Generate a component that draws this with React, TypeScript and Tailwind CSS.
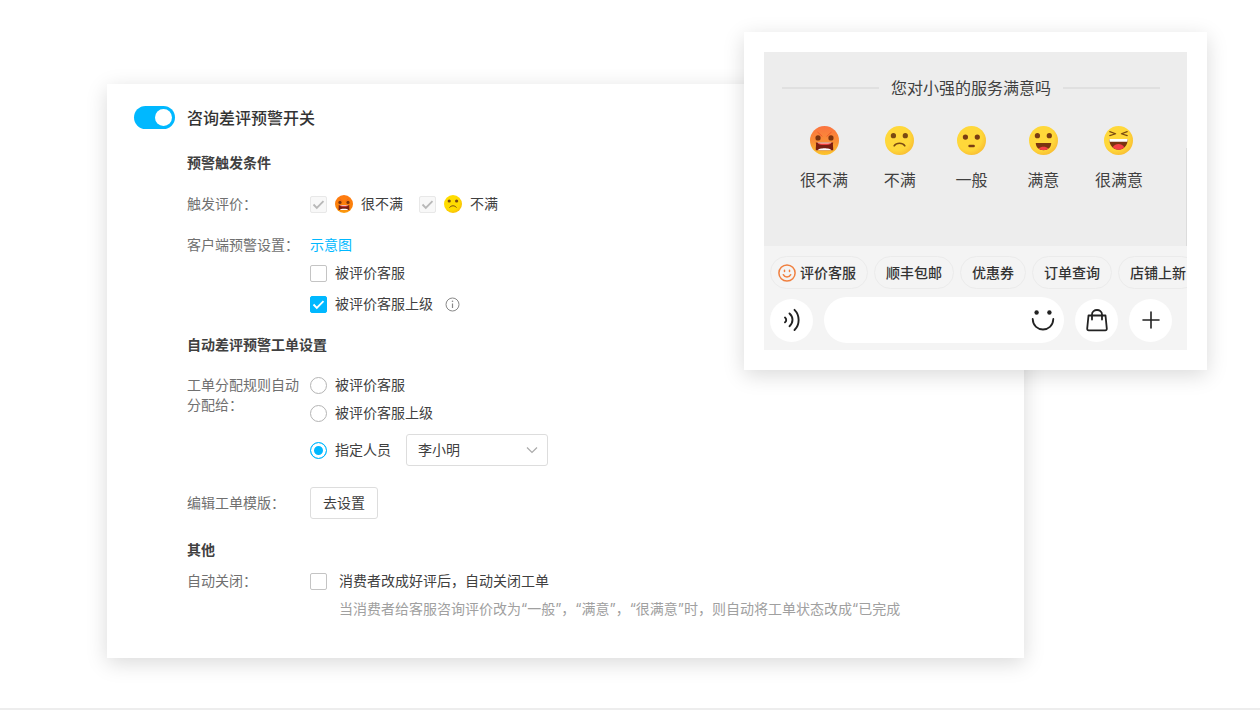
import { useState } from 'react';
import type { ReactNode } from 'react';

type Mood = 'angry' | 'sad' | 'neutral' | 'happy' | 'laugh';

const ratings: { mood: Mood; label: string }[] = [
  { mood: 'angry', label: '很不满' },
  { mood: 'sad', label: '不满' },
  { mood: 'neutral', label: '一般' },
  { mood: 'happy', label: '满意' },
  { mood: 'laugh', label: '很满意' },
];

const chips = ['顺丰包邮', '优惠券', '订单查询', '店铺上新'];

const faceFill = {
  soft: { angry: 'url(#face-angry)', other: 'url(#face-yellow)' },
  vivid: { angry: 'url(#face-angry-vivid)', other: 'url(#face-yellow-vivid)' },
};

const Emoji = ({ mood, className, tone = 'soft' }: { mood: Mood; className: string; tone?: 'soft' | 'vivid' }) => {
  const angry = mood === 'angry';
  return (
    <svg className={className} viewBox="0 0 30 30" fill="none" aria-hidden="true">
      <defs>
        <linearGradient id="face-angry" x1="0" y1="0" x2="0" y2="1">
          <stop offset="0" stopColor="#fb7440" />
          <stop offset="0.55" stopColor="#f98f35" />
          <stop offset="1" stopColor="#fcc62c" />
        </linearGradient>
        <linearGradient id="face-angry-vivid" x1="0" y1="0" x2="0" y2="1">
          <stop offset="0" stopColor="#ff7a10" />
          <stop offset="0.7" stopColor="#fb8209" />
          <stop offset="1" stopColor="#fba012" />
        </linearGradient>
        <radialGradient id="face-yellow" cx="0.42" cy="0.4" r="0.62">
          <stop offset="0.7" stopColor="#ffd83a" />
          <stop offset="1" stopColor="#f9bf33" />
        </radialGradient>
        <radialGradient id="face-yellow-vivid" cx="0.42" cy="0.4" r="0.62">
          <stop offset="0.7" stopColor="#ffdc00" />
          <stop offset="1" stopColor="#f8bd08" />
        </radialGradient>
      </defs>
      <circle cx="15" cy="15" r="15" fill={angry ? faceFill[tone].angry : faceFill[tone].other} />
      {angry && (
        <>
          <path d="M8 6.500l4.500 4M22 6.500l-4.500 4" stroke="#ee5a2c" strokeWidth="1" strokeLinecap="round" />
          <circle cx="8.300" cy="12.300" r="2.700" fill="#7c3410" />
          <circle cx="21.700" cy="12.300" r="2.700" fill="#7c3410" />
          <path d="M6 17h18c-.8 2.500.3 4.500 0 8H6c-.3-3.500.8-5.500 0-8z" fill="#7a1f12" />
          <path d="M8 17.500h14c-1 3-13 3-14 0z" fill="#ee3f3c" />
          <path d="M7.500 17h15c-.8 1.600-14.200 1.600-15 0z" fill="#ffe9e4" />
          <path d="M8 25c.8-2.800 13.200-2.800 14 0z" fill="#fff" />
        </>
      )}
      {mood === 'sad' && (
        <>
          <circle cx="8.700" cy="10" r="2.700" fill="#7a4a12" />
          <circle cx="21" cy="10" r="2.700" fill="#7a4a12" />
          <path d="M9.500 20.500c2.500-3.500 8.500-3.500 11 0" stroke="#7a4a12" strokeWidth="1.600" strokeLinecap="round" />
        </>
      )}
      {mood === 'neutral' && (
        <>
          <circle cx="8.700" cy="11.500" r="2.700" fill="#7a3d12" />
          <circle cx="21" cy="11.500" r="2.700" fill="#7a3d12" />
          <rect x="11.700" y="19.300" width="6.800" height="2.600" rx="1.300" fill="#7a3d12" />
        </>
      )}
      {mood === 'happy' && (
        <>
          <circle cx="8.700" cy="10" r="2.700" fill="#7a3d12" />
          <circle cx="21" cy="10" r="2.700" fill="#7a3d12" />
          <path d="M7 17.500h16c0 4.500-3.500 7.500-8 7.500s-8-3-8-7.500z" fill="#7a3410" />
          <path d="M10 23.200c2.500-2.200 7.500-2.200 10 0-2.500 2.300-7.500 2.300-10 0z" fill="#f43f45" />
        </>
      )}
      {mood === 'laugh' && (
        <>
          <path d="M6 5.800l6 2.200-6 2M24 5.800l-6 2.200 6 2" stroke="#7a4a12" strokeWidth="1.300" strokeLinecap="round" strokeLinejoin="round" />
          <path d="M5.500 13.500h19c0 7-4 11-9.500 11s-9.500-4-9.500-11z" fill="#7a3410" />
          <path d="M5.500 13.500h19l-.4 2.800H5.900z" fill="#fff" />
          <path d="M9 22c3-4.500 9-4.500 12 0-3 3.300-9 3.300-12 0z" fill="#f43f45" />
        </>
      )}
    </svg>
  );
};

type CheckProps = {
  children: ReactNode;
  defaultChecked?: boolean;
  disabled?: boolean;
  gap?: string;
};

const Check = ({ children, defaultChecked, disabled, gap = 'gap-2' }: CheckProps) => (
  <label className={`flex items-center ${gap}`}>
    <span className="relative flex">
      <input
        type="checkbox"
        defaultChecked={defaultChecked}
        disabled={disabled}
        className="peer size-[17px] appearance-none rounded-xs border border-[#c4c4c4] bg-white checked:border-[#00b8ff] checked:bg-[#00b8ff] disabled:border-[#e8e8e8] disabled:bg-[#f8f8f8]"
      />
      <svg
        className="pointer-events-none absolute inset-0 hidden size-[17px] text-white peer-checked:block peer-disabled:text-[#b8b8b8]"
        viewBox="0 0 17 17"
        fill="none"
        stroke="currentColor"
        strokeWidth="1.8"
      >
        <path d="M3.500 8.500l3.300 3.400 6.700-6.800" />
      </svg>
    </span>
    {children}
  </label>
);

type RadioProps = {
  value: string;
  current: string;
  onSelect: (value: string) => void;
  children: ReactNode;
};

const Radio = ({ value, current, onSelect, children }: RadioProps) => (
  <label className="flex items-center gap-2">
    <input
      type="radio"
      name="assignee"
      checked={current === value}
      onChange={() => onSelect(value)}
      className="size-[17px] appearance-none rounded-full border border-[#b4b4b4] bg-white checked:border-[#00b8ff] checked:bg-[#00b8ff] checked:shadow-[inset_0_0_0_3px_white]"
    />
    {children}
  </label>
);

const Row = ({ label, children }: { label: string; children: ReactNode }) => (
  <div className="grid grid-cols-[115px_1fr] gap-x-2">
    <div className="text-[#707070]">{label}</div>
    <div>{children}</div>
  </div>
);

const SettingsCard = () => {
  const [enabled, setEnabled] = useState(true);
  const [assignee, setAssignee] = useState('person');

  return (
    <section className="mr-[236px] ml-[107px] bg-white pt-[22px] pr-6 pb-[39px] pl-[27px] text-sm leading-5 text-[#404040] shadow-[0_5px_20px_rgba(0,0,0,0.15)]">
      <div className="flex items-center gap-3">
        <button
          type="button"
          role="switch"
          aria-checked={enabled}
          aria-labelledby="alert-title"
          onClick={() => setEnabled(!enabled)}
          className={`flex h-[23px] w-[41px] items-center rounded-full px-[3px] ${enabled ? 'justify-end bg-[#00b8ff]' : 'justify-start bg-[#c4c4c4]'}`}
        >
          <span className="size-[17px] rounded-full bg-white" />
        </button>
        <h2 id="alert-title" className="text-base leading-5 font-medium text-[#333]">咨询差评预警开关</h2>
      </div>

      <div className="mt-6 pl-[53px]">
        <h3 className="font-bold text-[#404040]">预警触发条件</h3>
        <div className="mt-[21px]">
          <Row label="触发评价：">
            <div className="flex gap-4">
              <Check defaultChecked disabled>
                <Emoji mood="angry" tone="vivid" className="size-[18px]" />
                <span>很不满</span>
              </Check>
              <Check defaultChecked disabled>
                <Emoji mood="sad" tone="vivid" className="size-[18px]" />
                <span>不满</span>
              </Check>
            </div>
          </Row>
        </div>
        <div className="mt-[21px]">
          <Row label="客户端预警设置：">
            <a href="#example" className="block text-[#00b8ff]">示意图</a>
            <div className="mt-2">
              <Check>被评价客服</Check>
            </div>
            <div className="mt-[11px] flex items-center gap-3">
              <Check defaultChecked>被评价客服上级</Check>
              <svg className="size-[15px] text-[#888]" viewBox="0 0 15 15" fill="none" stroke="currentColor" aria-hidden="true">
                <circle cx="7.500" cy="7.500" r="6.500" />
                <path d="M7.500 6.500v4.500" strokeWidth="1.200" />
                <circle cx="7.500" cy="4.300" r="0.800" fill="currentColor" stroke="none" />
              </svg>
            </div>
          </Row>
        </div>

        <h3 className="mt-[21px] font-bold text-[#404040]">自动差评预警工单设置</h3>
        <div className="mt-5">
          <Row label="工单分配规则自动分配给：">
            <Radio value="agent" current={assignee} onSelect={setAssignee}>被评价客服</Radio>
            <div className="mt-2">
              <Radio value="leader" current={assignee} onSelect={setAssignee}>被评价客服上级</Radio>
            </div>
            <div className="mt-[11px] flex items-center gap-[15px]">
              <Radio value="person" current={assignee} onSelect={setAssignee}>指定人员</Radio>
              <div className="relative">
                <select aria-label="指定人员" className="h-8 w-[142px] appearance-none rounded-[3px] border border-[#ddd] bg-white pl-[11px]">
                  <option>李小明</option>
                </select>
                <svg className="pointer-events-none absolute top-3 right-[10px] h-2 w-3 text-[#aaa]" viewBox="0 0 12 8" fill="none" stroke="currentColor" strokeWidth="1.200">
                  <path d="M1 1.500l5 5 5-5" />
                </svg>
              </div>
            </div>
          </Row>
        </div>
        <div className="mt-[21px] grid grid-cols-[115px_1fr] items-center gap-x-2">
          <div className="text-[#707070]">编辑工单模版：</div>
          <div>
            <button type="button" className="h-8 rounded-[3px] border border-[#ddd] bg-white px-3">去设置</button>
          </div>
        </div>

        <h3 className="mt-[21px] font-bold text-[#404040]">其他</h3>
        <div className="mt-[11px]">
          <Row label="自动关闭：">
            <Check gap="gap-3">消费者改成好评后，自动关闭工单</Check>
            <p className="mt-2 pl-[29px] text-[#a0a0a0]">
              当消费者给客服咨询评价改为“一般”，“满意”，“很满意”时，则自动将工单状态改成“已完成
            </p>
          </Row>
        </div>
      </div>
    </section>
  );
};

const roundButton = 'flex size-[43px] shrink-0 items-center justify-center rounded-full bg-white';
const chip = 'flex h-[33px] shrink-0 items-center rounded-full border border-[#ebebeb] text-sm font-medium';

const ChatPreview = () => (
  <section className="absolute top-8 right-[53px] w-[463px] bg-white p-5 shadow-[0_5px_20px_rgba(0,0,0,0.15)]">
    <div className="relative bg-[#ededed] pt-6 pb-[54px] text-base leading-6 text-[#404040]">
      <div className="flex items-center gap-3 pr-[27px] pl-[18px]">
        <span className="h-0.5 flex-1 bg-[#e0e0e0]" />
        <h2>您对小强的服务满意吗</h2>
        <span className="h-0.5 flex-1 bg-[#e0e0e0]" />
      </div>
      <div className="mt-[26px] flex justify-between pr-11 pl-9">
        {ratings.map(({ mood, label }) => (
          <button key={mood} type="button" className="flex min-w-10 flex-col items-center gap-[13px]">
            <Emoji mood={mood} className="size-[29px]" />
            <span>{label}</span>
          </button>
        ))}
      </div>
      <span className="absolute top-24 right-0 bottom-0 w-px bg-[#dcdcdc]" />
    </div>

    <div className="overflow-hidden bg-[#f4f4f4] pt-[10px] pb-[7px] pl-1.5 text-[#333]">
      <div className="flex gap-1.5">
        <button type="button" className={`${chip} gap-1 pr-[11px] pl-[7px]`}>
          <svg className="size-[18px] text-[#f08040]" viewBox="0 0 18 18" fill="none" stroke="currentColor" strokeWidth="1.500" strokeLinecap="round" aria-hidden="true">
            <circle cx="9" cy="9" r="8.100" />
            <path d="M6.500 6.300v1.200M11.500 6.300v1.200M5.300 10.700c1.500 3 5.900 3 7.400 0" />
          </svg>
          评价客服
        </button>
        {chips.map((text) => (
          <button key={text} type="button" className={`${chip} px-[11px]`}>{text}</button>
        ))}
      </div>
      <div className="mt-2 flex items-center gap-[11px] pr-[15px] text-[#222]">
        <button type="button" aria-label="语音" className={roundButton}>
          <svg className="size-6" viewBox="0 0 24 24" fill="none" stroke="currentColor" strokeWidth="1.900" strokeLinecap="round">
            <path d="M5 9.500c1.600 1.300 1.600 3.500 0 4.800M9.500 5.500c4 3.500 4 9.200 0 12.700M14.500 1.800c5.500 5.500 5.500 14.700 0 20.200" />
          </svg>
        </button>
        <div className="flex h-[46px] min-w-0 flex-1 items-center rounded-full bg-white pr-[9px] pl-4">
          <input type="text" aria-label="消息" className="min-w-0 flex-1 outline-none" />
          <button type="button" aria-label="表情">
            <svg className="size-6" viewBox="0 0 24 24" fill="none" stroke="currentColor" strokeWidth="1.800" strokeLinecap="round">
              <circle cx="5.600" cy="4.500" r="2.200" fill="currentColor" stroke="none" />
              <circle cx="18.400" cy="4.500" r="2.200" fill="currentColor" stroke="none" />
              <path d="M1.700 11c.5 14 20.100 14 20.600 0" />
            </svg>
          </button>
        </div>
        <button type="button" aria-label="商品" className={roundButton}>
          <svg className="size-6" viewBox="0 0 24 24" fill="none" stroke="currentColor" strokeWidth="1.800" strokeLinecap="round" strokeLinejoin="round">
            <path d="M3.500 7.500h17l1.300 13.200c.1 1-.5 1.600-1.500 1.600H3.700c-1 0-1.600-.6-1.500-1.600z" />
            <path d="M7 11.500V6.500c0-6 10-6 10 0v5" />
          </svg>
        </button>
        <button type="button" aria-label="更多" className={roundButton}>
          <svg className="size-5" viewBox="0 0 20 20" fill="none" stroke="currentColor" strokeWidth="1.600" strokeLinecap="round">
            <path d="M10 2v16M2 10h16" />
          </svg>
        </button>
      </div>
    </div>
  </section>
);

export default function App() {
  return (
    <main className="relative flex min-h-screen flex-col justify-between bg-white pt-[84px] pb-2 font-[Inter,'Noto_Sans_CJK_SC',sans-serif]">
      <SettingsCard />
      <ChatPreview />
      <hr className="border-t-2 border-[#ededed]" />
    </main>
  );
}
